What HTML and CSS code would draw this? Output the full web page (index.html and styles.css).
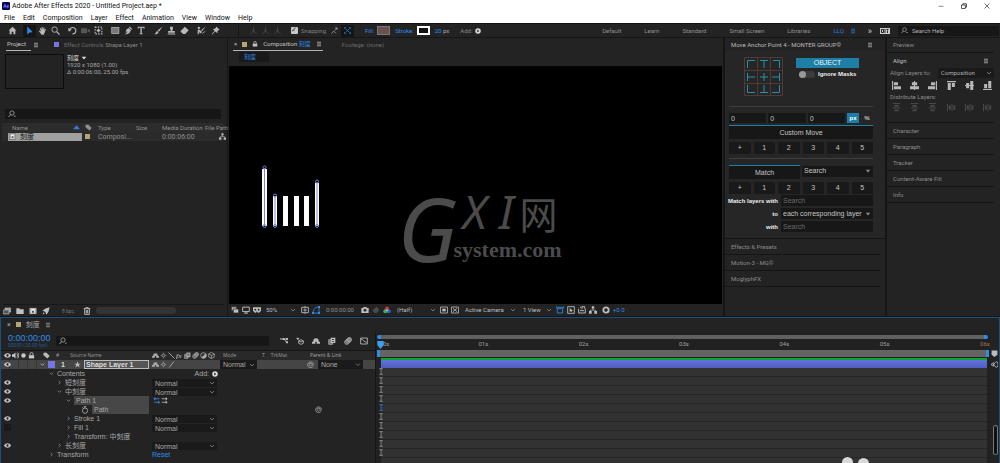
FILE: index.html
```html
<!DOCTYPE html>
<html lang="en">
<head>
<meta charset="utf-8">
<title>Adobe After Effects 2020 - Untitled Project.aep *</title>
<link rel="stylesheet" href="styles.css">
</head>
<body>
<svg class="defs" aria-hidden="true">
  <symbol id="home" viewBox="0 0 12 12"><path fill="currentColor" d="M6 1 .8 6h1.4v5h2.6V7.6h2.4V11h2.6V6h1.4z"/></symbol>
  <symbol id="arrow" viewBox="0 0 12 12"><path fill="currentColor" d="M3 .5v11l2.8-3 4.6-.3z"/></symbol>
  <symbol id="hand" viewBox="0 0 12 12"><path fill="currentColor" d="M3.4 2.2 4.6 5 5 1.2h1.2L6.6 5l1-3.2 1 .3-.4 3.5 1.4-1.8.9.5-1.8 5L7.500 11.500H4.800L1 6.500l.9-.6 2 1.300L2.300 2.700z"/></symbol>
  <symbol id="lens" viewBox="0 0 12 12"><circle cx="4.800" cy="4.800" r="3.600" fill="none" stroke="currentColor" stroke-width="1.200"/><path stroke="currentColor" stroke-width="1.600" d="m7.500 7.500 3.800 3.800"/></symbol>
  <symbol id="find" viewBox="0 0 12 12"><circle cx="6" cy="4.500" r="3.200" fill="none" stroke="currentColor" stroke-width="1.200"/><path stroke="currentColor" stroke-width="1.400" d="M3.800 7 .8 10.500"/><path fill="currentColor" d="M8.500 8.500H12l-1.800 2z"/></symbol>
  <symbol id="rotate" viewBox="0 0 12 12"><path fill="none" stroke="currentColor" stroke-width="1.400" d="M2.500 4.500A4.200 4.200 0 1 1 6 10.500"/><path fill="currentColor" d="M0 2.500 1 7.500 5 5z"/></symbol>
  <symbol id="camera" viewBox="0 0 12 12"><path fill="currentColor" d="M0 3h8v6.500H0zM8.500 5.500 12 3.500V9L8.500 7z"/></symbol>
  <symbol id="pan" viewBox="0 0 12 12"><rect x="1.500" y="1.500" width="9" height="9" fill="none" stroke="currentColor" stroke-width="1.500" stroke-dasharray="2 1.500"/><path fill="currentColor" d="M6 3 4.500 5 3 6l1.500 1L6 9l1.500-2L9 6 7.500 5z"/></symbol>
  <symbol id="rect" viewBox="0 0 12 12"><rect x="1" y="2" width="9.500" height="8" fill="#777" stroke="currentColor"/></symbol>
  <symbol id="pen" viewBox="0 0 12 12"><path fill="currentColor" d="M7.500.8 11 4 9.800 5 6.600 2zM6 2.500l3.300 3.300L7 9.500l-5.500 2 3-4-.7-.6L1.800 10 3 5z"/></symbol>
  <symbol id="type" viewBox="0 0 12 12"><path fill="currentColor" d="M1 1h9v2.800H9L8.500 2.300H6.400v7.500l1.300.5v.7H3.300v-.7l1.300-.5V2.300H2.500L2 3.800H1z"/></symbol>
  <symbol id="brush" viewBox="0 0 12 12"><path fill="currentColor" d="m11.500.5-5 7-1.700-1.400zM4.300 6.800 6 8.300C5.500 10.500 3 11.500.5 11 2.300 10 2.300 8 4.300 6.800z"/></symbol>
  <symbol id="stamp" viewBox="0 0 12 12"><path fill="currentColor" d="M4 1h4v2L7 6.500h3.500V9h-9V6.500H5L4 3zM1 10h10v1.300H1z"/></symbol>
  <symbol id="eraser" viewBox="0 0 12 12"><path fill="currentColor" d="m6.500 1 5 4.500-4.500 5H4L.5 7z"/></symbol>
  <symbol id="roto" viewBox="0 0 12 12"><path fill="currentColor" d="m11.500.5-4.500 6-1.500-1zM5 6l1.600 1.500C6 9.500 4.500 10 3 9.500 4 8.500 3.800 7 5 6zM2.500 1a1.500 1.500 0 1 1-.1 0M1 5h3l.8 3L3 7.500 2 11H.8z"/><path stroke="currentColor" d="m7 10 4-3"/></symbol>
  <symbol id="pin" viewBox="0 0 12 12"><path fill="currentColor" d="m7 .5 4.500 4.500-1.300.3-1.700 1.900.2 2.300L5.600 7.400 1.300 11.500.8 11l4-4.300L2.500 4l2.500-.2L6.800 2z"/></symbol>
  <symbol id="axis" viewBox="0 0 12 12"><path fill="none" stroke="currentColor" stroke-width="1.300" d="M6 1v6l-4.500 4M6 7l4.500 4"/><circle cx="6" cy="6.500" r="1.800" fill="currentColor"/></symbol>
  <symbol id="snap" viewBox="0 0 12 12"><path fill="none" stroke="currentColor" stroke-width="1.200" d="m1 11 3.500-4 4 4M6.500 6 10 2M7 1.500h3.500V5"/></symbol>
  <symbol id="bounds" viewBox="0 0 12 12"><path fill="none" stroke="currentColor" stroke-width="1.200" d="M1 3.500V1h2.500M8.500 1H11v2.500M11 8.500V11H8.500M3.500 11H1V8.500M3 3l6 6M9 3 3 9"/></symbol>
  <symbol id="gear" viewBox="0 0 12 12"><circle cx="6" cy="6" r="4" fill="none" stroke="currentColor" stroke-width="2.800"/></symbol>
  <symbol id="play" viewBox="0 0 12 12"><circle cx="6" cy="6" r="5.500" fill="currentColor"/><path fill="#232323" d="m4.500 3.200 4 2.800-4 2.800z"/></symbol>
  <symbol id="burger" viewBox="0 0 12 12"><path stroke="currentColor" stroke-width="1.500" d="M2 2.500h8M2 6h8M2 9.500h8"/></symbol>
  <symbol id="chev" viewBox="0 0 12 12"><path fill="none" stroke="currentColor" stroke-width="1.600" d="m2 4 4 4 4-4"/></symbol>
  <symbol id="chevr" viewBox="0 0 12 12"><path fill="none" stroke="currentColor" stroke-width="1.600" d="m4 2 4 4-4 4"/></symbol>
  <symbol id="tri" viewBox="0 0 12 12"><path fill="currentColor" d="M1.500 3.500h9L6 9z"/></symbol>
  <symbol id="triup" viewBox="0 0 12 12"><path fill="currentColor" d="M0 9h12L6 2z"/></symbol>
  <symbol id="lock" viewBox="0 0 12 12"><path fill="currentColor" d="M1.500 5.500h9V11h-9z"/><path fill="none" stroke="currentColor" stroke-width="1.500" d="M3.500 6V3.500a2.500 2.500 0 0 1 5 0V6"/></symbol>
  <symbol id="tag" viewBox="0 0 12 12"><path fill="currentColor" d="M.5 1.500 5.500 1 11.500 7 7.500 11.300 1 5.500z"/></symbol>
  <symbol id="comp" viewBox="0 0 12 12"><path fill="#eee" stroke="#444" d="M.5 1.500h11v9H.5z"/><path fill="#555" d="M2 3h1.300v1.300H2zm0 2.300h1.300v1.300H2zm0 2.200h1.300v1.300H2zM8.700 3H10v1.300H8.700zm0 2.300H10v1.300H8.700zm0 2.200H10v1.300H8.700zM4.500 5.500H7.500V8.500h-3z"/></symbol>
  <symbol id="tree" viewBox="0 0 12 12"><path fill="currentColor" d="M4.200.5h3.600v3.700H4.200zM0 7.500h4v4H0zM8 7.500h4v4H8z"/><path fill="none" stroke="currentColor" d="M6 4v2.500M2 8V6.300h8V8"/></symbol>
  <symbol id="footage" viewBox="0 0 12 12"><path fill="#999" stroke="currentColor" d="M3 1.500h8.500v6H3z"/><path fill="#555" stroke="currentColor" d="M.5 4.500H9v6H.5z"/></symbol>
  <symbol id="folder" viewBox="0 0 12 12"><path fill="currentColor" d="M.5 2H5l1 1.500h5.500V10.500H.5z"/></symbol>
  <symbol id="rocket" viewBox="0 0 12 12"><path fill="currentColor" d="M11.500.5 9.500 7.500 6.500 11.500 5.500 8.500 3.500 6.500.5 6 4.500 2.800zM1 11l1-3 2 2z"/></symbol>
  <symbol id="trash" viewBox="0 0 12 12"><path fill="none" stroke="currentColor" stroke-width="1.400" d="M1 2.500h10M4 2V1h4v1.500M2.500 3v8h7V3M5 4.500v5M7 4.500v5"/></symbol>
  <symbol id="screen" viewBox="0 0 12 12"><path fill="none" stroke="currentColor" stroke-width="1.400" d="M1 1.700h10v6.600H1zM6 8v2.500M3 10.700h6"/></symbol>
  <symbol id="mask" viewBox="0 0 12 12"><path fill="currentColor" d="M0 2h12v5l-3 3H7.500L6 8 4.500 10H3L0 7z"/><circle cx="3.500" cy="5.500" r="1.400" fill="#232323"/><circle cx="8.500" cy="5.500" r="1.400" fill="#232323"/></symbol>
  <symbol id="stack" viewBox="0 0 12 12"><path fill="#aaa" stroke="#232323" d="M.5 1h8v6h-8z"/><path fill="currentColor" stroke="#232323" d="M3.500 4.500h8v6h-8z"/></symbol>
  <symbol id="crop" viewBox="0 0 12 12"><path fill="none" stroke="currentColor" stroke-width="1.300" d="M1 2h10v8H1zM6 3.500v5M3.500 6h5M6 0v2M6 10v2"/></symbol>
  <symbol id="poly" viewBox="0 0 12 12"><path fill="none" stroke="currentColor" stroke-width="1.300" d="M1.500 10.500C2 5 4 2 10.500 1.500v9z"/><path fill="currentColor" d="M0 9h3v3H0zM9 0h3v3H9zM9 9h3v3H9z"/></symbol>
  <symbol id="photo" viewBox="0 0 12 12"><path fill="currentColor" d="M.5 3H3l1-1.500h4L9 3h2.500v7.500H.5z"/><circle cx="6" cy="6.500" r="2.200" fill="#333"/></symbol>
  <symbol id="rgb" viewBox="0 0 12 12"><circle cx="6" cy="3.800" r="3" fill="#d33"/><circle cx="3.500" cy="8" r="3" fill="#3b4"/><circle cx="8.500" cy="8" r="3" fill="#36d"/><circle cx="6" cy="6.500" r="1.200" fill="#eee"/></symbol>
  <symbol id="roi" viewBox="0 0 12 12"><path fill="none" stroke="currentColor" stroke-width="1.200" d="M.8 1.500h10.400v9H.8z"/><path fill="currentColor" d="M3.500 4h5v4h-5z"/></symbol>
  <symbol id="alpha" viewBox="0 0 12 12"><path fill="none" stroke="currentColor" stroke-width="1.200" d="M.8 1.500h10.400v9H.8zM3 3.500l6 5M9 3.500l-6 5"/></symbol>
  <symbol id="pixel" viewBox="0 0 12 12"><path fill="none" stroke="currentColor" stroke-width="1.300" d="M0 2h12M2 4h8v6.500H2zM0 0v4M12 0v4"/></symbol>
  <symbol id="fast" viewBox="0 0 12 12"><path fill="none" stroke="currentColor" stroke-width="1.300" d="M1 1h10v10H1z"/><path fill="currentColor" d="m4 3 5 4-2 .5L9 10 6 8 4 9z"/></symbol>
  <symbol id="tlbox" viewBox="0 0 12 12"><path fill="none" stroke="currentColor" stroke-width="1.400" d="M1 4v6.500h10V4M3 7h6M4 3V1M6 5V1h4v3"/></symbol>
  <symbol id="mini" viewBox="0 0 12 12"><path fill="none" stroke="currentColor" stroke-width="1.500" d="M0 3h6l4 5M6 3h6"/><path fill="currentColor" d="M4 1.500h3v3H4zM9 6.500h3v3H9zM9 1.500h3v3H9z"/></symbol>
  <symbol id="draft" viewBox="0 0 12 12"><path fill="currentColor" d="m0 1 5 .5L3 5z"/><path fill="none" stroke="currentColor" stroke-width="1.300" d="m7.500 4 3.500 1.700v3.800L7.500 11 4 9.500V5.700zM4 5.700 7.500 7.500 11 5.700"/></symbol>
  <symbol id="shy" viewBox="0 0 12 12"><path fill="currentColor" d="M2 6a4 4 0 0 1 8 0v1h2v3H7V7H5v3H0V7h2z"/></symbol>
  <symbol id="blend" viewBox="0 0 12 12"><path fill="#777" stroke="currentColor" d="M1 4h6v7H1z"/><path fill="currentColor" d="M4 1h7v8H4z"/><path fill="#444" d="M6 3h3v1.500H6zM6 6h3v1H6z"/></symbol>
  <symbol id="blur" viewBox="0 0 12 12"><circle cx="4.200" cy="7.800" r="3.300" fill="#555" stroke="currentColor"/><circle cx="6" cy="6" r="3.300" fill="#666" stroke="currentColor"/><circle cx="8" cy="4" r="3.300" fill="#888" stroke="currentColor"/></symbol>
  <symbol id="graph" viewBox="0 0 12 12"><path fill="none" stroke="currentColor" stroke-width="1.300" d="M1 1.500h10v9H1zM1 3c4 0 5 5 9 5"/></symbol>
  <symbol id="eye" viewBox="0 0 12 12"><path fill="currentColor" d="M0 6c3-5 9-5 12 0-3 5-9 5-12 0z"/><circle cx="6" cy="6" r="2" fill="#222"/></symbol>
  <symbol id="sound" viewBox="0 0 12 12"><path fill="currentColor" d="M0 4h2.500L6 1v10L2.500 8H0z"/><path fill="none" stroke="currentColor" stroke-width="1.500" d="M8 3c2 1.500 2 4.500 0 6M9.500 1c3 2.500 3 7.500 0 10"/></symbol>
  <symbol id="dot" viewBox="0 0 12 12"><circle cx="6" cy="6" r="3.800" fill="currentColor"/></symbol>
  <symbol id="star" viewBox="0 0 12 12"><path fill="currentColor" d="m6 .5 1.500 4h4.200L8.300 7l1.300 4.300L6 8.700l-3.600 2.600L3.700 7 .3 4.500h4.200z"/></symbol>
  <symbol id="sun" viewBox="0 0 12 12"><circle cx="6" cy="6" r="2.500" fill="none" stroke="currentColor" stroke-width="1.400"/><path stroke="currentColor" d="M6 1v2M6 9v2M1 6h2M9 6h2"/></symbol>
  <symbol id="slash" viewBox="0 0 12 12"><path stroke="currentColor" stroke-width="1.600" d="m2 11 8-10"/></symbol>
  <symbol id="bslash" viewBox="0 0 12 12"><path stroke="currentColor" stroke-width="1.600" d="m1 1 10 10"/></symbol>
  <symbol id="half" viewBox="0 0 12 12"><circle cx="6" cy="6" r="4.800" fill="none" stroke="currentColor" stroke-width="1.400"/><path fill="currentColor" d="M9.500 2.500a4.800 4.800 0 0 1-7 7z"/></symbol>
  <symbol id="cube" viewBox="0 0 12 12"><path fill="none" stroke="currentColor" stroke-width="1.300" d="m6 .8 4.800 2.500v5.400L6 11.200 1.200 8.700V3.300zM1.200 3.300 6 6l4.800-2.700M6 6v5"/></symbol>
  <symbol id="whip" viewBox="0 0 12 12"><path fill="none" stroke="currentColor" stroke-width="1.300" d="M10.500 9A5 5 0 1 1 11 5.500c0 2.500-3 2.500-2.500 0a2.500 2.500 0 1 0-.5 2"/></symbol>
  <symbol id="watch" viewBox="0 0 12 12"><circle cx="6" cy="7" r="4" fill="none" stroke="currentColor" stroke-width="1.300"/><path stroke="currentColor" stroke-width="1.400" d="M4 1h4M6 1v2M2 2l1.500 1.500"/></symbol>
  <symbol id="dirs" viewBox="0 0 24 12"><path fill="none" stroke="#2f8fe0" stroke-width="1.400" d="M1 3h9M1 9h9"/><path fill="#2f8fe0" d="m0 3 3-3v6zM11 9 8 6v6z"/><path stroke="#bbb" stroke-width="1.400" d="M14 3h8M14 9h8"/><path fill="#bbb" d="m24 3-3-3v6zM24 9l-3-3v6z"/></symbol>
  <symbol id="al" viewBox="0 0 12 12"><path fill="currentColor" d="M0 0h1.500v12H0zM2.500 1.500H8v4H2.500zM2.500 7H12v4H2.500z"/></symbol>
  <symbol id="ac" viewBox="0 0 12 12"><path fill="currentColor" d="M5.300 0h1.400v12H5.300zM2.500 1.500h7v4h-7zM0 7h12v4H0z"/></symbol>
  <symbol id="dv" viewBox="0 0 12 12"><path fill="currentColor" d="M1 0h10v1.300H1zM3 2.500h6V5H3zM1 6h10v1.300H1zM3 8.500h6V11H3z"/></symbol>
  <symbol id="ibeam" viewBox="0 0 6 12"><path stroke="currentColor" stroke-width="1.400" d="M3 1v10M0 1.200h6M0 10.800h6"/></symbol>
</svg>

<header class="titlebar">
  <svg class="logo" viewBox="0 0 18 18"><rect width="18" height="18" rx="3" fill="#00005b"/><path fill="none" stroke="#99f" stroke-width="1.500" d="m3.500 13 3-8 3 8M4.500 10.500h4M11 10h4c0-3.500-4-3.500-4 0s3 3.500 4 2"/></svg>
  <h1>Adobe After Effects 2020 - Untitled Project.aep *</h1>
  <div class="winctl">
    <button aria-label="Minimize"><svg viewBox="0 0 12 12"><path stroke="#222" d="M1 6.500h10"/></svg></button>
    <button aria-label="Restore"><svg viewBox="0 0 12 12"><path fill="none" stroke="#222" stroke-width="1.500" d="M1 4h7.500v7H1zM3.500 4V1.500h7.500v7H8.500"/></svg></button>
    <button aria-label="Close"><svg viewBox="0 0 12 12"><path stroke="#222" stroke-width="1.300" d="m1 1 10 10M11 1 1 11"/></svg></button>
  </div>
</header>
<nav class="menubar">
  <button>File</button><button>Edit</button><button>Composition</button><button>Layer</button><button>Effect</button><button>Animation</button><button>View</button><button>Window</button><button>Help</button>
</nav>

<div class="toolbar">
  <div class="tools"><button aria-label="Home"><svg><use href="#home"/></svg></button></div>
  <div class="tools">
    <button class="active" aria-label="Selection"><svg><use href="#arrow"/></svg></button>
    <button aria-label="Hand"><svg><use href="#hand"/></svg></button>
    <button aria-label="Zoom"><svg><use href="#lens"/></svg></button>
  </div>
  <div class="tools">
    <button aria-label="Rotate"><svg><use href="#rotate"/></svg></button>
    <button class="dim" aria-label="Camera"><svg><use href="#camera"/></svg></button>
    <button aria-label="Pan behind"><svg><use href="#pan"/></svg></button>
  </div>
  <div class="tools">
    <button aria-label="Rectangle"><svg><use href="#rect"/></svg></button>
    <button aria-label="Pen"><svg><use href="#pen"/></svg></button>
    <button aria-label="Type"><svg><use href="#type"/></svg></button>
  </div>
  <div class="tools">
    <button aria-label="Brush"><svg><use href="#brush"/></svg></button>
    <button aria-label="Clone stamp"><svg><use href="#stamp"/></svg></button>
    <button aria-label="Eraser"><svg><use href="#eraser"/></svg></button>
  </div>
  <div class="tools wide">
    <button aria-label="Roto brush"><svg><use href="#roto"/></svg></button>
    <button aria-label="Puppet pin"><svg><use href="#pin"/></svg></button>
  </div>
  <div class="tools axes">
    <button aria-label="Local axis"><svg><use href="#axis"/></svg></button>
    <button aria-label="World axis"><svg><use href="#axis"/></svg></button>
    <button aria-label="View axis"><svg><use href="#axis"/></svg></button>
  </div>
  <label class="snapping"><input type="checkbox" checked><span>Snapping</span></label>
  <div class="tools snaps">
    <button aria-label="Snap edges"><svg><use href="#snap"/></svg></button>
    <button class="active" aria-label="Snap bounds"><svg><use href="#bounds"/></svg></button>
  </div>
  <div class="paint">
    <button class="link">Fill:</button><button class="swatch fill" aria-label="Fill color"></button>
    <button class="link">Stroke:</button><button class="swatch stroke" aria-label="Stroke color"></button>
    <span class="width"><b>20</b> px</span>
    <button class="add">Add: <svg><use href="#play"/></svg></button>
  </div>
  <div class="workspaces">
    <button>Default</button><button>Learn</button><button>Standard</button><button>Small Screen</button><button>Libraries</button><button class="on">LLQ <svg><use href="#burger"/></svg></button>
  </div>
  <button class="more" aria-label="More workspaces">»</button>
  <button class="sync" aria-label="Workspace layout"><svg viewBox="0 0 20 12"><path fill="#ccc" d="M0 0h20v12H0z"/><path fill="none" stroke="#222" stroke-width="2" d="M3 3h4v6H3zM10 2v8M13 3h4M15 5v5"/></svg></button>
  <label class="help"><svg><use href="#find"/></svg><input type="search" placeholder="Search Help" aria-label="Search Help"></label>
</div>

<main class="workspace">
  <section class="panel project">
    <div class="tabs">
      <span class="tab on"><span>Project</span><svg><use href="#burger"/></svg></span>
      <span class="tab faint"><i class="chip violet"></i><span>Effect Controls <b>Shape Layer 1</b></span></span>
    </div>
    <div class="meta">
      <div class="thumb"></div>
      <div class="lines"><p class="name">刻度 <svg><use href="#tri"/></svg></p><p>1920 x 1080 (1.00)</p><p>Δ 0:00:06:00, 25.00 fps</p></div>
    </div>
    <label class="search"><svg><use href="#find"/></svg><input type="text" aria-label="Search project"></label>
    <table class="items">
      <thead><tr><th class="c-name"><span>Name <svg class="up"><use href="#triup"/></svg></span></th><th class="c-tag"><svg><use href="#tag"/></svg></th><th class="c-type">Type</th><th class="c-size">Size</th><th class="c-dur">Media Duration</th><th>File Path</th></tr></thead>
      <tbody><tr><td class="c-name"><span class="pick"><svg><use href="#comp"/></svg><b>刻度</b></span></td><td><i class="chip tan"></i></td><td>Composi...</td><td></td><td>0:00:06:00</td><td class="end"><svg><use href="#tree"/></svg></td></tr></tbody>
    </table>
    <div class="footer">
      <button aria-label="Interpret footage"><svg><use href="#footage"/></svg></button>
      <button aria-label="New folder"><svg><use href="#folder"/></svg></button>
      <button aria-label="New composition"><svg><use href="#comp"/></svg></button>
      <button aria-label="Project settings"><svg><use href="#rocket"/></svg></button>
      <span class="bpc">8 bpc</span>
      <button aria-label="Delete"><svg><use href="#trash"/></svg></button>
      <span class="scroll"></span>
    </div>
  </section>

  <section class="panel composition">
    <div class="tabs">
      <span class="tab on"><span class="x">×</span><i class="chip tan"></i><svg><use href="#lock"/></svg><span>Composition <em>刻度</em></span><svg><use href="#burger"/></svg></span>
      <span class="tab faint">Footage: (none)</span>
    </div>
    <div class="crumbs"><button>刻度</button></div>
    <div class="stage">
      <svg class="bars" viewBox="0 0 64 66">
        <g fill="#fff"><path d="M3 4h5v57H3zM14 31h4v30h-4zM24 31h5v30h-5zM35 31h5v30h-5zM45 31h5v30h-5zM56 18h4v43h-4z"/></g>
        <g fill="none" stroke="#7d82d8"><path d="M5.500 3v58M16 31v30M58 17v44"/><circle cx="5.500" cy="2.500" r="1.500"/><circle cx="16" cy="30.500" r="1.500"/><circle cx="58" cy="16.500" r="1.500"/><circle cx="5.500" cy="61" r="1.500"/><circle cx="16" cy="61" r="1.500"/><circle cx="58" cy="61" r="1.500"/></g>
      </svg>
      <div class="mark"><span class="g">G</span><span class="xi">X I</span><span class="net">网</span><span class="sys">system.com</span></div>
    </div>
    <div class="viewbar">
      <button aria-label="Always preview"><svg><use href="#stack"/></svg></button>
      <button aria-label="Primary viewer"><svg><use href="#screen"/></svg></button>
      <button aria-label="Mask"><svg><use href="#mask"/></svg></button>
      <span class="dd zoom"><select aria-label="Magnification"><option>50%</option></select><svg><use href="#chev"/></svg></span>
      <button aria-label="Guides"><svg><use href="#crop"/></svg></button>
      <button class="blue" aria-label="Shape path visibility"><svg><use href="#poly"/></svg></button>
      <span class="time">0:00:00:00</span>
      <button aria-label="Snapshot"><svg><use href="#photo"/></svg></button>
      <button class="dim" aria-label="Show snapshot"><svg><use href="#eraser"/></svg></button>
      <button aria-label="Channels"><svg><use href="#rgb"/></svg></button>
      <span class="dd res"><select aria-label="Resolution"><option>(Half)</option></select><svg><use href="#chev"/></svg></span>
      <button aria-label="Region of interest"><svg><use href="#roi"/></svg></button>
      <button aria-label="Transparency grid"><svg><use href="#alpha"/></svg></button>
      <span class="dd cam"><select aria-label="3D view"><option>Active Camera</option></select><svg><use href="#chev"/></svg></span>
      <span class="dd views"><select aria-label="View layout"><option>1 View</option></select><svg><use href="#chev"/></svg></span>
      <button class="blue" aria-label="Pixel aspect"><svg><use href="#pixel"/></svg></button>
      <button aria-label="Fast previews"><svg><use href="#fast"/></svg></button>
      <button aria-label="Timeline"><svg><use href="#tlbox"/></svg></button>
      <button aria-label="Flowchart"><svg><use href="#tree"/></svg></button>
      <button class="apart" aria-label="Reset exposure"><svg><use href="#gear"/></svg></button>
      <button class="link">+0.0</button>
    </div>
  </section>

  <section class="panel mover">
    <div class="tabs"><span class="tab">Move Anchor Point 4 - MONTER GROUP©</span><svg><use href="#burger"/></svg></div>
    <div class="mover-body">
      <div class="anchor">
        <svg class="grid9" viewBox="0 0 39 39" role="img" aria-label="Anchor grid">
          <path fill="none" stroke="#503a37" d="M.5.500h38v38H.5zM13.500 0v39M26.500 0v39M0 13.500h39M0 26.500h39"/>
          <path fill="none" stroke="#2391ab" d="M3.500 11V3.500H11M16 3.500h8M20 3.500V11M29 3.500h6.500V11M3.500 16v8M3.500 20H11M16 20h8M20 16v8M28 20h7.500M35.500 16v8M3.500 28v7.500H11M16 35.500h8M20 28v7.500M28 35.500h7.500V28"/>
        </svg>
        <div class="obj"><button class="object">OBJECT</button><label class="toggle"><input type="checkbox">Ignore Masks</label></div>
      </div>
      <hr>
      <div class="nums"><input value="0" aria-label="X"><input value="0" aria-label="Y"><input value="0" aria-label="Z"><button class="unit on">px</button><button class="unit">%</button></div>
      <button class="title">Custom Move</button>
      <div class="six"><button>+</button><button>1</button><button>2</button><button>3</button><button>4</button><button>5</button></div>
      <hr>
      <div class="match"><button class="title">Match</button><span class="dd"><select aria-label="Match property"><option>Search</option></select><svg><use href="#tri"/></svg></span></div>
      <div class="six"><button>+</button><button>1</button><button>2</button><button>3</button><button>4</button><button>5</button></div>
      <div class="fields">
        <label for="mw">Match layers with</label><input id="mw" placeholder="Search">
        <label for="mt">to</label><span class="dd"><select id="mt"><option>each corresponding layer</option></select><svg><use href="#tri"/></svg></span>
        <label for="mx">with</label><input id="mx" placeholder="Search">
      </div>
    </div>
    <ul class="stacked"><li>Effects &amp; Presets</li><li>Motion-3 - MG©</li><li>MoglyphFX</li></ul>
  </section>

  <section class="panel side">
    <h2>Preview</h2>
    <div class="align">
      <h2 class="open">Align <svg><use href="#burger"/></svg></h2>
      <label class="to">Align Layers to: <span class="dd"><select><option>Composition</option></select><svg><use href="#chev"/></svg></span></label>
      <div class="aligns">
        <button aria-label="Align left"><svg><use href="#al"/></svg></button><button aria-label="Align center"><svg><use href="#ac"/></svg></button><button aria-label="Align right"><svg class="flip"><use href="#al"/></svg></button><button aria-label="Align top"><svg class="quarter"><use href="#al"/></svg></button><button aria-label="Align middle"><svg class="turn"><use href="#ac"/></svg></button><button aria-label="Align bottom"><svg class="turn"><use href="#al"/></svg></button>
      </div>
      <p>Distribute Layers:</p>
      <div class="aligns muted">
        <button aria-label="Distribute top"><svg><use href="#dv"/></svg></button><button aria-label="Distribute middle"><svg><use href="#dv"/></svg></button><button aria-label="Distribute bottom"><svg><use href="#dv"/></svg></button><button aria-label="Distribute left"><svg class="turn"><use href="#dv"/></svg></button><button aria-label="Distribute center"><svg class="turn"><use href="#dv"/></svg></button><button aria-label="Distribute right"><svg class="turn"><use href="#dv"/></svg></button>
      </div>
    </div>
    <ul class="stacked"><li>Character</li><li>Paragraph</li><li>Tracker</li><li>Content-Aware Fill</li><li>Info</li></ul>
  </section>
</main>

<section class="timeline">
  <div class="tabs"><span class="tab"><span class="x">×</span><i class="chip tan"></i><span>刻度</span><svg><use href="#burger"/></svg></span></div>
  <div class="tl-body">
    <div class="layers">
      <div class="tl-top">
        <div class="clock"><strong>0:00:00:00</strong><small>00000 (25.00 fps)</small></div>
        <label class="search"><svg><use href="#find"/></svg><input type="text" aria-label="Search layers"></label>
        <div class="tl-icons">
          <button aria-label="Mini-flowchart"><svg><use href="#mini"/></svg></button><button aria-label="Draft 3D"><svg><use href="#draft"/></svg></button><button aria-label="Hide shy"><svg><use href="#shy"/></svg></button><button aria-label="Frame blending"><svg><use href="#blend"/></svg></button><button aria-label="Motion blur"><svg><use href="#blur"/></svg></button><button aria-label="Graph editor"><svg><use href="#graph"/></svg></button>
        </div>
      </div>
      <div class="row head">
        <div class="av"><svg><use href="#eye"/></svg><svg><use href="#sound"/></svg><svg><use href="#dot"/></svg><svg><use href="#lock"/></svg></div>
        <div class="nm"><svg><use href="#tag"/></svg><span>#</span><span class="src">Source Name</span></div>
        <div class="sw"><svg><use href="#shy"/></svg><svg><use href="#sun"/></svg><svg><use href="#bslash"/></svg><i>fx</i><svg><use href="#blend"/></svg><svg><use href="#blur"/></svg><svg><use href="#half"/></svg><svg><use href="#cube"/></svg></div>
        <div class="md">Mode</div><div class="tm"><span>T</span><span>TrkMat</span></div><div class="pl">Parent &amp; Link</div>
      </div>
      <div class="row layer">
        <div class="av"><svg><use href="#eye"/></svg></div>
        <div class="nm"><svg class="tw"><use href="#chev"/></svg><i class="chip violet"></i><span class="num">1</span><svg class="st"><use href="#star"/></svg><span class="box">Shape Layer 1</span></div>
        <div class="sw"><svg><use href="#shy"/></svg><svg><use href="#sun"/></svg><svg><use href="#slash"/></svg></div>
        <div class="md"><span class="dd"><select aria-label="Layer mode"><option>Normal</option></select><svg><use href="#chev"/></svg></span></div>
        <div class="tm"></div>
        <div class="pl"><svg><use href="#whip"/></svg><span class="dd"><select aria-label="Parent"><option>None</option></select><svg><use href="#chev"/></svg></span></div>
      </div>
      <div class="row"><div class="av"></div><div class="nm d1"><svg class="tw"><use href="#chev"/></svg><span>Contents</span></div><div class="addc">Add: <svg><use href="#play"/></svg></div></div>
      <div class="row"><div class="av"><svg><use href="#eye"/></svg></div><div class="nm d2"><svg class="tw"><use href="#chevr"/></svg><span>短刻度</span></div><div class="sw"><span class="dd"><select aria-label="Mode of 短刻度"><option>Normal</option></select><svg><use href="#chev"/></svg></span></div></div>
      <div class="row"><div class="av"><svg><use href="#eye"/></svg></div><div class="nm d2"><svg class="tw"><use href="#chev"/></svg><span>中刻度</span></div><div class="sw"><span class="dd"><select aria-label="Mode of 中刻度"><option>Normal</option></select><svg><use href="#chev"/></svg></span></div></div>
      <div class="row"><div class="av"><svg><use href="#eye"/></svg></div><div class="nm d3"><svg class="tw"><use href="#chev"/></svg><span class="sel">Path 1</span></div><div class="sw"><svg class="dirs"><use href="#dirs"/></svg></div></div>
      <div class="row"><div class="av"></div><div class="nm d4"><svg class="tw"><use href="#watch"/></svg><span class="sel">Path</span></div><div class="sw"></div><div class="md"></div><div class="tm"></div><div class="pl far"><svg><use href="#whip"/></svg></div></div>
      <div class="row"><div class="av"><svg><use href="#eye"/></svg></div><div class="nm d3"><svg class="tw"><use href="#chevr"/></svg><span>Stroke 1</span></div><div class="sw"><span class="dd"><select aria-label="Stroke mode"><option>Normal</option></select><svg><use href="#chev"/></svg></span></div></div>
      <div class="row"><div class="av"><i class="hidden-eye"></i></div><div class="nm d3"><svg class="tw"><use href="#chevr"/></svg><span>Fill 1</span></div><div class="sw"><span class="dd"><select aria-label="Fill mode"><option>Normal</option></select><svg><use href="#chev"/></svg></span></div></div>
      <div class="row"><div class="av"></div><div class="nm d3"><svg class="tw"><use href="#chevr"/></svg><span>Transform: 中刻度</span></div></div>
      <div class="row"><div class="av"><svg><use href="#eye"/></svg></div><div class="nm d2"><svg class="tw"><use href="#chevr"/></svg><span>长刻度</span></div><div class="sw"><span class="dd"><select aria-label="Mode of 长刻度"><option>Normal</option></select><svg><use href="#chev"/></svg></span></div></div>
      <div class="row"><div class="av"></div><div class="nm d1"><svg class="tw"><use href="#chevr"/></svg><span>Transform</span></div><div class="sw"><button class="link">Reset</button></div></div>
    </div>
    <div class="time-area">
      <div class="navbar"></div>
      <div class="ruler"><span class="first">0s</span><span>01s</span><span>02s</span><span>03s</span><span>04s</span><span>05s</span><span class="last">06s</span></div>
      <div class="work"></div>
      <div class="cache"></div>
      <div class="clip"></div>
      <div class="tracks">
        <div><svg><use href="#ibeam"/></svg></div><div><svg><use href="#ibeam"/></svg></div><div><svg><use href="#ibeam"/></svg></div><div><svg><use href="#ibeam"/></svg></div><div class="hot"><svg><use href="#ibeam"/></svg></div><div><svg><use href="#ibeam"/></svg></div><div><svg><use href="#ibeam"/></svg></div><div><svg><use href="#ibeam"/></svg></div><div><svg><use href="#ibeam"/></svg></div><div><svg><use href="#ibeam"/></svg></div>
      </div>
      <svg class="playhead" viewBox="0 0 8 10"><path fill="#3ba0f0" d="M0 0h8v5L4 10 0 5z"/></svg>
      <svg class="knobs" viewBox="0 0 27 6"><circle cx="5.500" cy="5.500" r="5.500" fill="#d8d8d8"/><circle cx="21.500" cy="6.500" r="5.500" fill="#d8d8d8"/></svg>
    </div>
    <div class="gutter">
      <svg viewBox="0 0 12 12"><path fill="#bbb" d="M1 1h10v7l-5 4-5-4z"/></svg>
      <svg viewBox="0 0 12 12"><path fill="none" stroke="#bbb" stroke-width="1.500" d="m0 6 4-3v6zM5 5l4-4 3 2v6l-3 2-4-4z"/></svg>
      <span class="vbar"></span>
    </div>
  </div>
</section>
</body>
</html>
```

FILE: styles.css
```css
* { box-sizing: border-box; }
body {
  margin: 0;
  min-height: 100vh;
  display: flex;
  flex-direction: column;
  background: #161616;
  color: #a8a8a8;
  font: 6px/8px Roboto, "Noto Sans CJK SC", sans-serif;
}
button, input, select { font: inherit; color: inherit; background: none; border: 0; padding: 0; margin: 0; border-radius: 0; min-width: 0; outline: 0; }
button { display: flex; align-items: center; justify-content: center; white-space: nowrap; }
select, input[type="search"] { appearance: none; }
h1, h2, p, ul { margin: 0; padding: 0; font: inherit; list-style: none; }
svg { width: 8px; height: 8px; flex: none; display: block; }
i, em { font-style: normal; }
b { font-weight: 400; }
.defs { position: absolute; width: 0; height: 0; }
.link, em { color: #2d8ceb; }
.dim { color: #4a4a4a; }
.chip { width: 5px; height: 5px; flex: none; display: block; }
.violet { background: #7377df; }
.tan { background: #b5a576; }

.dd { display: inline-grid; align-items: center; background: #1a1a1a; }
.dd > * { grid-area: 1 / 1; }
.dd select { width: 100%; padding-left: 3px; }
.dd svg { justify-self: end; width: 6px; height: 6px; margin-right: 2px; pointer-events: none; color: #888; }

.titlebar { display: flex; align-items: center; height: 12px; background: #fff; color: #111; font-size: 7px; padding-left: 2px; gap: 2px; }
.logo { width: 8px; height: 8px; }
.winctl { display: flex; margin-left: auto; gap: 17px; padding-right: 10px; }
.winctl svg { width: 6px; height: 6px; }
.menubar { display: flex; align-items: center; height: 11px; padding: 0 0 0 4px; gap: 8px; background: #fff; color: #111; font-size: 7px; }

.toolbar { display: flex; align-items: center; height: 14px; margin-bottom: 1px; padding: 0 1px 0 6px; gap: 4px; background: #232323; border-top: 1px solid #111; }
.tools { display: flex; }
.tools button { width: 13px; height: 12px; color: #b8b8b8; }
.tools svg { width: 9px; height: 9px; }
.tools .active { background: #151515; color: #2d8ceb; }
.tools .dim { color: #555; }
.wide { padding-right: 15px; border-right: 1px solid #161616; }
.wide button + button { width: 15px; }
.axes { margin-left: 4px; }
.axes button { width: 12px; color: #414141; }
.snapping { display: flex; align-items: center; gap: 3px; margin-left: 4px; color: #808080; }
.snapping input { appearance: none; width: 7px; height: 7px; background: #c8c8c8; border-radius: 1px; }
.snapping input:checked::after { content: "✓"; display: block; color: #222; font: 700 7px/7px "DejaVu Sans", sans-serif; }
.snaps { margin-left: -2px; }
.snaps svg { width: 7px; height: 7px; }
.paint { display: flex; align-items: center; margin-left: 7px; gap: 3px; }
.swatch { width: 13px; height: 9px; margin-right: 2px; }
.fill { background: #6a5150; border: 1px solid #777; }
.stroke { border: 2px solid #fff; background: #111; }
.width b { color: #2d8ceb; }
.add { margin-left: 8px; gap: 3px; color: #888; }
.add svg { width: 6px; height: 6px; color: #ddd; }
.workspaces { display: flex; margin-left: auto; gap: 23px; color: #909090; }
.workspaces .on { color: #2d7be0; gap: 6px; }
.workspaces svg { width: 6px; height: 6px; }
.more { margin-left: 8px; color: #ccc; font-size: 9px; }
.sync { margin-left: 4px; }
.sync svg { width: 10px; height: 6px; }
.help { display: flex; align-items: center; gap: 4px; width: 101px; height: 10px; margin-left: 4px; padding-left: 3px; background: #171717; }
.help svg { width: 7px; height: 7px; }
.help input { width: 80px; }
.help input::placeholder { color: #b0b0b0; }

.workspace { flex: 1; display: grid; grid-template-columns: 227px minmax(0, 1fr) 161px 114px; gap: 1px; }
.panel { background: #232323; display: flex; flex-direction: column; min-width: 0; }
.tabs { display: flex; align-items: center; height: 13px; white-space: nowrap; }
.tabs svg { width: 6px; height: 6px; }
.tab { display: flex; align-items: center; height: 13px; }
.tab.on { border-bottom: 1px solid #b5b5b5; color: #c4c4c4; }
.faint { color: #6c6c6c; }
.faint b { color: #8a8a8a; }

.project { padding: 0 5px; }
.project .tabs { gap: 15px; padding-left: 1px; }
.project .on { gap: 6px; border: 0; }
.project .on span { border-bottom: 1px solid #b5b5b5; line-height: 12px; padding: 0 5px 0 1px; }
.project .on svg { margin-left: -4px; }
.project .faint { gap: 5px; }
.meta { display: flex; gap: 3px; margin-top: 3px; }
.thumb { width: 59px; height: 35px; border: 1px solid #0c0c0c; }
.lines p { line-height: 7px; white-space: nowrap; }
.lines .name { display: flex; gap: 2px; align-items: center; color: #ddd; }
.lines svg { width: 6px; height: 6px; }
.search { display: flex; align-items: center; background: #161616; height: 10px; padding-left: 3px; }
.search input { flex: 1; }
.project .search { margin-top: 20px; margin-right: 1px; }
.items { width: calc(100% + 4px); border-collapse: collapse; table-layout: fixed; margin: 4px -3px 0; text-align: left; }
.items th, .items td { font-weight: 400; padding: 0 0 0 3px; height: 9px; white-space: nowrap; color: #909090; font-size: 6px; }
.items td { font-size: 7px; }
.items thead { background: #2c2c2c; }
.items tbody { background: #2b2b2b; }
.items .c-name { width: 80px; padding: 0 0 0 6px; }
.c-name span { display: flex; align-items: center; justify-content: space-between; padding: 0 2px 0 4px; }
.c-name .up { color: #2d7be0; }
.items svg { width: 7px; height: 7px; }
.items .c-tag { width: 13px; }
.c-type { width: 38px; } .c-size { width: 26px; } .c-dur { width: 43px; }
.items .pick { justify-content: flex-start; gap: 4px; background: #a0a0a0; color: #111; padding: 0 1px; }
.items .end svg { margin-left: 14px; color: #bbb; }
.footer { display: flex; align-items: center; gap: 5px; height: 12px; margin: auto -2px 0; border-top: 1px solid #181818; color: #c0c0c0; }
.bpc { margin: 0 4px 0 7px; color: #777; font-size: 5px; }
.scroll { width: 80px; height: 7px; background: #343434; border-radius: 4px; }

.composition { padding: 0 1px; }
.composition .tabs { padding-left: 4px; gap: 19px; }
.composition .tab.on { gap: 5px; padding: 0 1px; }
.crumbs { height: 15px; padding: 1px 10px; }
.crumbs button { background: #191919; color: #2d8ceb; width: 30px; height: 10px; justify-content: flex-start; padding-left: 5px; }
.stage { flex: 1; position: relative; background: #000; overflow: hidden; }
.bars { position: absolute; left: 30px; top: 99px; width: 64px; height: 66px; }
.mark { position: absolute; left: 50%; top: 50%; color: #4b4b4b; white-space: nowrap; }
.mark span { position: absolute; }
.mark .g { left: -78px; top: -2px; font: italic 88px/90px "Noto Sans", sans-serif; }
.mark .xi { left: -13px; top: 3px; font: italic 46px/46px "Noto Sans", sans-serif; }
.mark .net { left: 44px; top: 10px; font: 38px/36px "Noto Sans CJK SC", sans-serif; }
.mark .sys { left: -22px; top: 53px; font: 700 22px/24px "Liberation Serif", serif; }
.viewbar { display: flex; align-items: center; height: 12px; gap: 2px; padding-left: 1px; color: #bdbdbd; white-space: nowrap; }
.viewbar > button { min-width: 9px; }
.viewbar .blue { color: #2d8ceb; }
.viewbar .dd { background: none; }
.viewbar .link { color: #2d8ceb; }
.zoom { width: 35px; } .res { width: 44px; } .cam { width: 56px; } .views { width: 34px; }
.time { margin: 0 5px 0 4px; color: #909090; }
.apart { margin-left: 2px; }

.mover { border-left: 1px solid #151515; }
.mover .tabs { justify-content: space-between; padding: 0 12px 0 6px; color: #bbb; }
.mover-body { background: #262626; padding: 6px 12px 6px 4px; font: 7px/8px "Liberation Sans", sans-serif; color: #c5c5c5; }
.anchor { display: flex; gap: 13px; padding-left: 15px; }
.grid9 { width: 39px; height: 39px; }
.object { width: 63px; height: 10px; background: #1d7fa5; color: #e8f4fa; margin-top: 1px; }
.toggle { display: flex; align-items: center; gap: 3px; margin-top: 2px; color: #eee; font-weight: 700; font-size: 6px; white-space: nowrap; }
.toggle input { appearance: none; display: block; width: 16px; height: 7px; margin-left: 3px; border-radius: 4px; background: #3c3c3c; }
.toggle input::before { content: ""; display: block; width: 7px; height: 7px; border-radius: 50%; background: #999; }
.mover hr { border: 0; border-top: 1px solid #3e3e3e; margin: 10px 0 6px; }
.nums { display: grid; grid-template-columns: 1fr 1fr 1fr 12px 12px; gap: 2px; }
.nums input, .fields input { width: 100%; height: 10px; background: #171717; padding-left: 2px; }
.nums .unit { font-size: 6px; font-weight: 700; height: 10px; }
.unit.on { background: #1d7fa5; color: #fff; }
.title { width: 100%; height: 14px; margin-top: 2px; background: #171717; border-top: 1px solid #1d7fa5; }
.six { display: grid; grid-template-columns: repeat(6, 1fr); gap: 3px; margin-top: 3px; }
.six button { height: 12px; background: #191919; }
.mover .six + hr { margin: 4px 0 4px; }
.match { display: grid; grid-template-columns: 1fr 1fr; gap: 2px; align-items: center; }
.match .dd { height: 11px; }
.fields { display: grid; grid-template-columns: 49px 1fr; gap: 2px 3px; margin-top: 1px; align-items: center; text-align: right; }
.fields label { font-size: 6px; font-weight: 700; color: #eee; white-space: nowrap; justify-self: end; }
.fields .dd, .fields input { height: 11px; }
.fields input::placeholder { color: #6a6a6a; }
.mover .dd { background: #171717; }
.mover .dd select { padding-left: 2px; }
.stacked li { height: 16px; line-height: 15px; padding-left: 6px; margin-right: 5px; border-bottom: 1px solid #151515; color: #8c8c8c; }
.mover .stacked { border-top: 1px solid #151515; }

.side { padding-right: 6px; border-left: 1px solid #151515; }
.side h2 { height: 15px; line-height: 14px; padding-left: 6px; color: #8c8c8c; border-bottom: 1px solid #151515; }
.side .open { display: flex; align-items: center; justify-content: space-between; padding-right: 5px; color: #c0c0c0; border: 0; }
.open svg { width: 6px; height: 6px; }
.align { border-bottom: 1px solid #151515; height: 70px; color: #8c8c8c; }
.to { display: flex; align-items: center; gap: 7px; padding-left: 3px; white-space: nowrap; }
.to .dd { flex: 1; color: #b0b0b0; height: 10px; }
.align p { padding-left: 3px; }
.aligns { display: flex; justify-content: space-between; padding: 3px 2px 3px 5px; color: #b8b8b8; }
.aligns svg { width: 9px; height: 9px; }
.aligns.muted { color: #484848; padding-top: 2px; }
.flip { transform: scaleX(-1); }
.quarter { transform: rotate(90deg); }
.turn { transform: rotate(-90deg); }
.side .stacked li { margin: 0; }

.timeline { background: #232323; border: 1px solid #1c4f7c; border-bottom: 0; margin-top: 1px; }
.timeline > .tabs { height: 13px; padding-left: 6px; }
.timeline .tab { gap: 5px; font-size: 7px; }
.tl-body { display: flex; }
.layers { width: 375px; padding-bottom: 4px; border-right: 1px solid #151515; }
.tl-top { display: flex; align-items: center; height: 19px; }
.clock { width: 55px; padding-left: 7px; color: #2d8ceb; }
.clock strong { display: block; font: 400 9px/10px "Liberation Sans", sans-serif; white-space: nowrap; }
.clock small { display: block; font-size: 5px; line-height: 5px; color: #22588d; white-space: nowrap; }
.tl-top .search { width: 213px; }
.tl-icons { display: flex; gap: 8px; margin-left: 11px; color: #bbb; }
.row { display: grid; grid-template-columns: 37px 112px 69px 40px 47px 1fr; height: 9px; align-items: center; white-space: nowrap; font: 7px/9px "Liberation Sans", "Noto Sans CJK SC", sans-serif; }
.row > div { display: flex; align-items: center; height: 9px; min-width: 0; }
.row > .av { padding-left: 3px; gap: 1px; color: #c8c8c8; }
.av svg, .sw svg { width: 7px; height: 7px; }
.hidden-eye { width: 7px; height: 7px; background: #1a1a1a; }
.head { font: 5px/9px "Open Sans", sans-serif; background: #292929; border-top: 1px solid #151515; height: 10px; color: #999; }
.head .nm { padding-left: 5px; gap: 6px; }
.head .src { padding-left: 5px; }
.head .nm svg { width: 7px; height: 7px; color: #bbb; }
.sw { padding-left: 2px; gap: 1px; color: #a8a8a8; }
.head .sw i { font: italic 700 7px/8px "Liberation Serif", serif; width: 7px; }
.head .md, .head .pl { padding-left: 4px; }
.tm { padding-left: 3px; gap: 6px; }
.layer { background: #454545; }
.layer .av { background: repeating-linear-gradient(90deg, #454545 0 8px, #363636 8px 9px); }
.layer .nm { gap: 3px; padding-left: 1px; font-weight: 700; color: #ddd; }
.layer .chip { width: 7px; height: 7px; }
.layer .tw { width: 5px; margin-left: 1px; }
.num { width: 13px; padding-left: 3px; }
.nm .st { width: 7px; height: 7px; color: #bbb; }
.layer .box { flex: 1; height: 9px; margin-right: 1px; border: 1px solid #bbb; background: #555; line-height: 8px; text-decoration: underline; overflow: hidden; padding-left: 1px; }
.pl { gap: 4px; color: #aaa; }
.layer .pl .dd { width: 45px; }
.layer .pl { padding-left: 1px; }
.layer .md .dd { width: 37px; margin-left: 1px; }
.pl svg { width: 7px; height: 7px; }
.pl .dd svg { width: 6px; }
.far { padding-left: 9px; }
.d1 { padding-left: 11px; } .d2 { padding-left: 19px; } .d3 { padding-left: 28px; } .d4 { padding-left: 43px; }
.row .tw { width: 5px; height: 5px; }
.nm { gap: 3px; }
.row .d4 .tw { width: 8px; height: 8px; }
.sel { flex: 1; height: 9px; background: #474747; margin-right: 1px; padding-left: 2px; }
.sw .dd { width: 65px; height: 8px; }
.sw .dd svg { width: 6px; height: 6px; }
.sw .dirs { width: 17px; height: 7px; }
.addc { justify-content: flex-end; gap: 3px; padding-right: 1px; }
.addc svg { width: 6px; height: 6px; color: #ddd; }

.time-area { flex: 1; display: flex; flex-direction: column; position: relative; overflow: hidden; padding: 4px 2px 0 1px; background: #212121; }
.time-area > * { flex: none; }
.navbar { height: 4px; background: #606060; border: solid #2d8ceb; border-width: 0 4px; border-radius: 2px; margin-right: 1px; }
.ruler { height: 11px; display: flex; justify-content: space-between; margin: 0 4px; line-height: 10px; color: #a0a0a0; }
.ruler span { width: 0; display: flex; justify-content: center; white-space: nowrap; }
.ruler .first { justify-content: flex-start; padding-left: 2px; }
.ruler .last { color: #a87353; }
.work { height: 7px; background: #646464; border: solid #2d8ceb; border-width: 0 3px; }
.cache { height: 2px; margin: 1px 2px 0 4px; background: #12a32e; }
.clip { height: 8px; margin: 0 2px 0 4px; background: linear-gradient(#6173de, #505cc0); }
.time-area .tracks { flex: 1; margin: 0 2px 0 4px; background: #323232; }
.tracks div { height: 9px; border-bottom: 1px solid #262626; color: #999; }
.tracks svg { width: 4px; height: 7px; margin-left: -2px; overflow: visible; }
.tracks .hot { color: #2d7be0; }
.playhead { position: absolute; left: 1px; top: 10px; width: 7px; height: 8px; }
.knobs { position: absolute; right: 122px; bottom: 0; width: 27px; height: 6px; }
.gutter { width: 8px; display: flex; flex-direction: column; gap: 4px; padding-top: 19px; }
.gutter svg { width: 7px; height: 7px; }
.vbar { width: 5px; height: 30px; margin: auto 0 8px 2px; border: 1px solid #777; border-radius: 3px; background: #111; border-bottom-color: #3a8a4a; }
```
